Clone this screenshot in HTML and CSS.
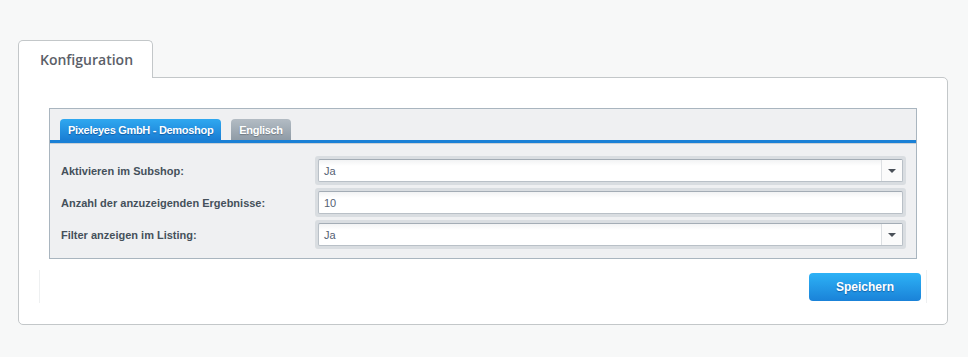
FILE: index.html
```html
<!DOCTYPE html>
<html lang="de">
<head>
    <meta charset="UTF-8">
    <title>Konfiguration</title>
    <link rel="stylesheet" href="styles.css">
</head>
<body>
    <div class="page">
        <!-- Haupt-Reiter -->
        <div class="main-tabs">
            <div class="main-tab">Konfiguration</div>
        </div>

        <div class="panel">
            <div class="shop-box">
                <div class="shop-tabs">
                    <div class="shop-tab active">Pixeleyes GmbH - Demoshop</div>
                    <div class="shop-tab">Englisch</div>
                </div>

                <div class="form">
                    <div class="row">
                        <label>Aktivieren im Subshop:</label>
                        <div class="field-frame">
                            <div class="field select">
                                <span class="value">Ja</span>
                                <span class="trigger"><span class="arrow"></span></span>
                            </div>
                        </div>
                    </div>
                    <div class="row">
                        <label>Anzahl der anzuzeigenden Ergebnisse:</label>
                        <div class="field-frame">
                            <div class="field">
                                <span class="value">10</span>
                            </div>
                        </div>
                    </div>
                    <div class="row">
                        <label>Filter anzeigen im Listing:</label>
                        <div class="field-frame">
                            <div class="field select">
                                <span class="value">Ja</span>
                                <span class="trigger"><span class="arrow"></span></span>
                            </div>
                        </div>
                    </div>
                </div>
            </div>

            <div class="toolbar">
                <button>Speichern</button>
            </div>
        </div>
    </div>
</body>
</html>
```

FILE: styles.css
```css
/* Allgemein */
body {
    margin: 0;
    background-color: #f7f8f8;
    font-family: 'Liberation Sans', Arial, sans-serif;
}

.page {
    padding: 40px 20px 0 18px;
    width: 930px;
}

/* Haupt-Reiter */
.main-tabs {
    display: flex;
}

.main-tab {
    width: 112px;
    height: 37px;
    padding-left: 21px;
    line-height: 38px;
    background-color: #fff;
    border: 1px solid #c3c7c9;
    border-bottom: none;
    border-radius: 5px 5px 0 0;
    margin-bottom: -1px;
    position: relative;
    font-family: 'Open Sans', sans-serif;
    font-size: 14px;
    font-weight: 600;
    color: #5b6068;
}

.panel {
    background-color: #fff;
    border: 1px solid #c3c7c9;
    border-radius: 0 5px 5px 5px;
    padding: 30px 30px 21px 30px;
}

/* Shop-Box */
.shop-box {
    border: 1px solid #a9b5bf;
    background-color: #eff0f2;
}

.shop-tabs {
    display: flex;
    gap: 10px;
    padding: 10px 10px 0 10px;
    border-bottom: 3px solid #1a80d6;
    box-shadow: 0 1px 0 #c9d0d6;
}

.shop-tab {
    height: 21px;
    line-height: 22px;
    padding: 0 8px;
    border-radius: 4px 4px 0 0;
    background: linear-gradient(#b3bcc4, #8f9ba6);
    color: #fff;
    font-size: 11px;
    font-weight: bold;
    letter-spacing: -0.3px;
    text-shadow: 0 1px 1px rgba(60, 70, 80, 0.45);
}

.shop-tab.active {
    background: linear-gradient(#2fa8f0, #1a7ed4);
    text-shadow: 0 1px 1px rgba(10, 60, 130, 0.6);
}

/* Formular */
.form {
    padding: 13px 10px 9px 11px;
    display: flex;
    flex-direction: column;
    gap: 3px;
}

.row {
    display: flex;
    align-items: center;
}

.row label {
    width: 254px;
    font-size: 11px;
    font-weight: bold;
    color: #45505b;
}

.field-frame {
    flex: 1;
    background-color: #d9dde1;
    border-radius: 3px;
    padding: 3px;
}

.field {
    display: flex;
    height: 21px;
    background: linear-gradient(#f2f3f4, #fff 6px);
    border: 1px solid #b9c0c7;
    border-top-color: #a3acb5;
    border-radius: 2px;
}

.value {
    flex: 1;
    padding-left: 5px;
    line-height: 22px;
    font-size: 11px;
    color: #556173;
}

.trigger {
    width: 20px;
    border-left: 1px solid #dcdfe2;
    background-color: #fbfbfb;
    display: flex;
    align-items: center;
    justify-content: center;
}

.arrow {
    width: 0;
    height: 0;
    border-left: 4px solid transparent;
    border-right: 4px solid transparent;
    border-top: 4px solid #4a5058;
}

/* Werkzeugleiste */
.toolbar {
    margin: 11px -10px 0 -10px;
    padding: 3px 5px 2px 0;
    border-left: 1px solid #eef0f1;
    border-right: 1px solid #eef0f1;
    display: flex;
    justify-content: flex-end;
}

button {
    width: 112px;
    height: 28px;
    border: none;
    border-radius: 4px;
    background: linear-gradient(#2db2f6, #1a82d8);
    color: #fff;
    font-family: 'Liberation Sans', Arial, sans-serif;
    font-size: 12px;
    font-weight: bold;
    text-shadow: 0 1px 1px rgba(10, 60, 130, 0.55);
    cursor: pointer;
}
```
